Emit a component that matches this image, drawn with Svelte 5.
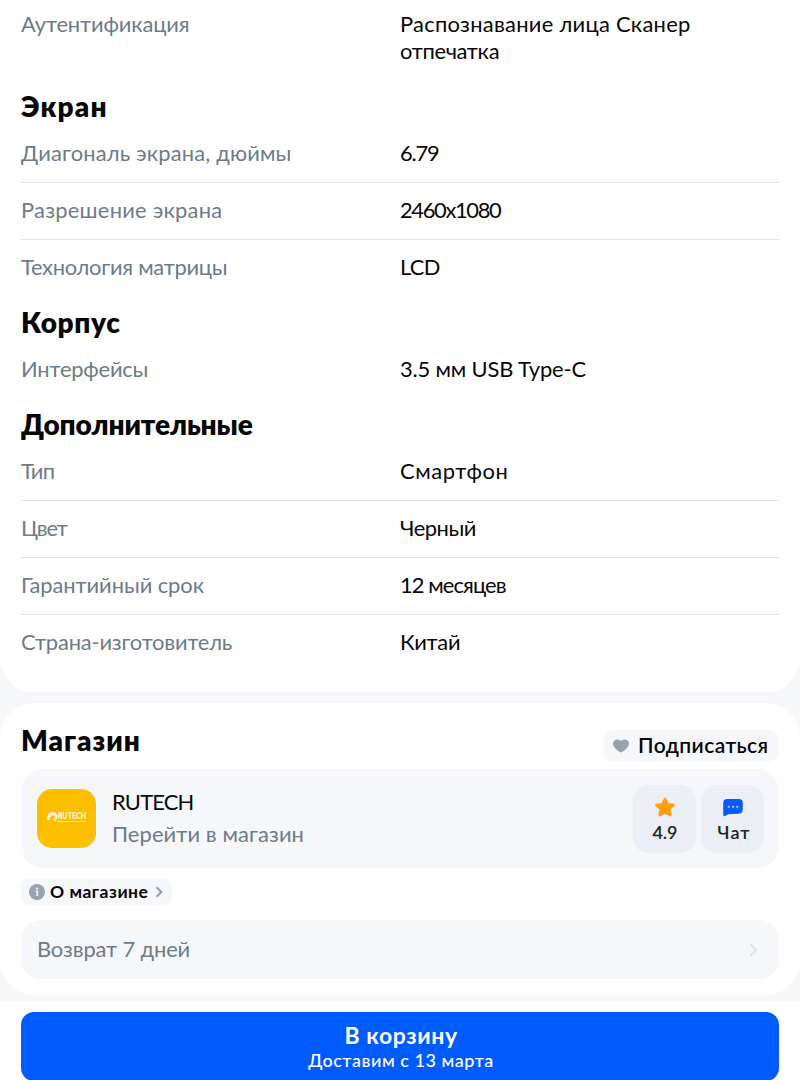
<script>
  const sections = [
    {
      rows: [
        { name: 'Аутентификация', ns: -0.12, value: ['Распознавание лица Сканер', 'отпечатка'], vs: [0.28, -0.32] }
      ]
    },
    {
      title: 'Экран', ts: 1.2,
      rows: [
        { name: 'Диагональ экрана, дюймы', ns: 0.16, value: ['6.79'], vs: [-1.2] },
        { name: 'Разрешение экрана', ns: 0.25, value: ['2460x1080'], vs: [-1.35] },
        { name: 'Технология матрицы', ns: -0.28, value: ['LCD'], vs: [-0.7] }
      ]
    },
    {
      title: 'Корпус', ts: 0.65,
      rows: [{ name: 'Интерфейсы', ns: -0.2, value: ['3.5 мм USB Type-C'], vs: [-0.16] }]
    },
    {
      title: 'Дополнительные', ts: -0.12,
      rows: [
        { name: 'Тип', ns: -0.7, value: ['Смартфон'], vs: [0.6] },
        { name: 'Цвет', ns: -1.1, value: ['Черный'], vs: [-0.45] },
        { name: 'Гарантийный срок', ns: -0.06, value: ['12 месяцев'], vs: [-0.9] },
        { name: 'Страна-изготовитель', ns: -0.18, value: ['Китай'], vs: [-0.25] }
      ]
    }
  ];
</script>

<main class="page">
  <section class="card specs">
    {#each sections as section}
      {#if section.title}
        <h2 style="letter-spacing:{section.ts}px">{section.title}</h2>
      {/if}
      <dl>
        {#each section.rows as row}
          <div class="row">
            <dt style="letter-spacing:{row.ns}px">{row.name}</dt>
            <dd>
              {#each row.value as line, i}
                <span style="letter-spacing:{row.vs[i]}px">{line}</span>
              {/each}
            </dd>
          </div>
        {/each}
      </dl>
    {/each}
  </section>

  <section class="card shop">
    <header>
      <h2 class="shop-title">Магазин</h2>
      <button class="follow">
        <svg width="16" height="14" viewBox="0 0 16 14"><path fill="#96a3ae" d="M8 13.4C6.6 13 0 8.900 0 4.700 0 2.100 1.900.4 4.300.4 5.900.4 7.300 1.100 8 2.200 8.700 1.100 10.100.4 11.700.4 14.100.4 16 2.100 16 4.700 16 8.900 9.400 13 8 13.400Z" /></svg>
        <span>Подписаться</span>
      </button>
    </header>

    <div class="seller">
      <div class="logo">
        <svg width="59" height="59" viewBox="0 0 59 59">
          <path d="M11.300 31.200C10.800 26.300 13.400 23.700 16 24.200C19.800 25 20.400 29.300 16.800 31.800" fill="none" stroke="#fff8dc" stroke-width="2.200" />
          <path d="M12.800 27.300L16.700 24.200L17.500 26.200L15 26.500L13.200 28.500Z" fill="#fff8dc" />
          <text x="20.700" y="30.400" textLength="28.500" lengthAdjust="spacingAndGlyphs" font-family="Lato" font-size="8.500" font-weight="800" letter-spacing="0" fill="#fff3c4">RUTECH</text>
          <path d="M20.700 32.500H49.200" stroke="#ffe586" stroke-width="1" />
        </svg>
      </div>
      <div class="seller-text">
        <div class="seller-name">RUTECH</div>
        <div class="seller-link">Перейти в магазин</div>
      </div>
      <div class="tile">
        <svg width="22" height="21" viewBox="0 0 22 21"><path d="M11 2L13.500 7.200L19.500 8L15.200 12.100L16.200 18.100L11 15.300L5.800 18.100L6.800 12.100L2.500 8L8.500 7.200Z" fill="#ff9d0a" stroke="#ff9d0a" stroke-width="2.600" stroke-linejoin="round" /></svg>
        <span>4.9</span>
      </div>
      <div class="tile chat">
        <svg width="22" height="21" viewBox="0 0 22 21"><path fill="#075cff" d="M5.200 2H16.800Q20.800 2 20.800 6V12.200Q20.800 16.300 16.800 16.700Q10 16.700 6.300 17.200L3.200 19Q1.200 19.800 1.200 17.500V6Q1.200 2 5.200 2Z" /><g fill="#a9c9ff"><circle cx="6.700" cy="9.800" r="1.150" /><circle cx="11" cy="9.800" r="1.150" /><circle cx="15.300" cy="9.800" r="1.150" /></g></svg>
        <span>Чат</span>
      </div>
    </div>

    <button class="about">
      <svg width="16" height="16" viewBox="0 0 16 16"><circle cx="8" cy="8" r="8" fill="#96a3ae" /><circle cx="8" cy="4.600" r="1.200" fill="#e9edf2" /><path d="M6.600 7.400H8.300V11.900" fill="none" stroke="#e9edf2" stroke-width="1.800" /></svg>
      <span>О магазине</span>
      <svg class="more" width="8" height="12" viewBox="0 0 8 12"><path d="M1.500 1.200L6.300 6L1.500 10.800" fill="none" stroke="#96a3ae" stroke-width="2.300" /></svg>
    </button>

    <div class="returns">
      <span>Возврат 7 дней</span>
      <svg width="9" height="14" viewBox="0 0 9 14"><path d="M1.500 1.300L7 7L1.500 12.700" fill="none" stroke="#dbe0e9" stroke-width="2" /></svg>
    </div>
  </section>

  <footer>
    <button class="buy">
      <strong>В корзину</strong>
      <span>Доставим с 13 марта</span>
    </button>
  </footer>
</main>

<style>
  :global(body) { overflow: hidden; }
  .page, .page * { box-sizing: border-box; }
  .page {
    display: flex;
    flex-direction: column;
    width: 800px;
    height: 1080px;
    overflow: hidden;
    background: #f5f7fb;
    color: #070707;
    font: 21.9px/27px Lato, "Open Sans", sans-serif;
  }
  button { border: 0; margin: 0; padding: 0; font: inherit; color: inherit; display: flex; align-items: center; }
  svg { display: block; flex: none; }
  .card { background: #fff; padding: 0 21px; flex: none; }
  .specs { height: 692px; border-radius: 0 0 34px 34px; }
  h2 { margin: 0; font-size: 28px; font-weight: 800; line-height: 45px; height: 45px; padding-top: 3px; }
  dl { margin: 0; }
  .row { display: grid; grid-template-columns: 379px 1fr; padding: 13px 0 16px; border-bottom: 1px solid #e0e5ea; }
  .row:last-child { border-bottom: 0; padding-bottom: 17px; }
  .specs > dl:first-child .row { padding-top: 10px; }
  dt { color: #6c7b88; white-space: nowrap; }
  dd { margin: 0; }
  dd span { display: block; white-space: nowrap; }

  .shop { margin-top: 11px; height: 292px; border-radius: 34px; }
  header { display: flex; justify-content: space-between; height: 66px; }
  .shop-title { padding-top: 15px; letter-spacing: 1px; }
  .follow { width: 176px; height: 32px; margin-top: 27px; padding-left: 10px; gap: 9px; border-radius: 10px; background: #f5f7fb; font-size: 21px; font-weight: 600; letter-spacing: 0.42px; white-space: nowrap; }
  .follow span { padding-bottom: 3px; }
  .seller { display: flex; height: 99px; padding: 16px 15px 0 16px; border-radius: 22px; background: #f5f7fb; }
  .logo { width: 59px; height: 59px; margin: 4px 16px 0 0; border-radius: 15px; background: #fcbf00; overflow: hidden; }
  .seller-text { flex: 1; padding-top: 1px; line-height: 32px; }
  .seller-name { letter-spacing: -0.8px; }
  .seller-link { color: #6c7b88; letter-spacing: 0.1px; }
  .tile { display: flex; flex-direction: column; align-items: center; width: 63px; height: 68px; padding-top: 12px; border-radius: 16px; background: #ebeef5; font-size: 18px; font-weight: 600; line-height: 22px; color: #202326; }
  .tile span { margin-top: 3px; padding-left: 1px; }
  .chat { margin-left: 5px; }
  .chat span { padding-left: 3px; letter-spacing: 1px; }
  .about { width: 151px; height: 27px; margin-top: 10px; padding-left: 8px; border-radius: 8px; background: #f5f7fb; font-size: 17.5px; font-weight: 700; letter-spacing: 0.5px; white-space: nowrap; }
  .about span { margin-left: 5px; }
  .more { margin-left: 7px; }
  .returns { display: flex; align-items: center; justify-content: space-between; height: 59px; margin-top: 15px; padding: 0 21px 0 16px; border-radius: 20px; background: #f5f7fb; color: #6c7b88; letter-spacing: -0.12px; }
  .returns span { padding-bottom: 2px; }

  footer { margin-top: 6px; height: 79px; padding: 11px 21px 0; background: #fff; flex: none; }
  .buy { flex-direction: column; width: 758px; height: 69px; padding-top: 10px; border-radius: 13px; background: #005bff; color: #fff; }
  .buy strong { font-size: 23px; font-weight: 700; line-height: 27px; letter-spacing: 0.6px; padding-left: 2px; }
  .buy span { font-size: 18px; font-weight: 500; line-height: 22px; letter-spacing: 0.53px; padding-left: 2px; }
</style>
